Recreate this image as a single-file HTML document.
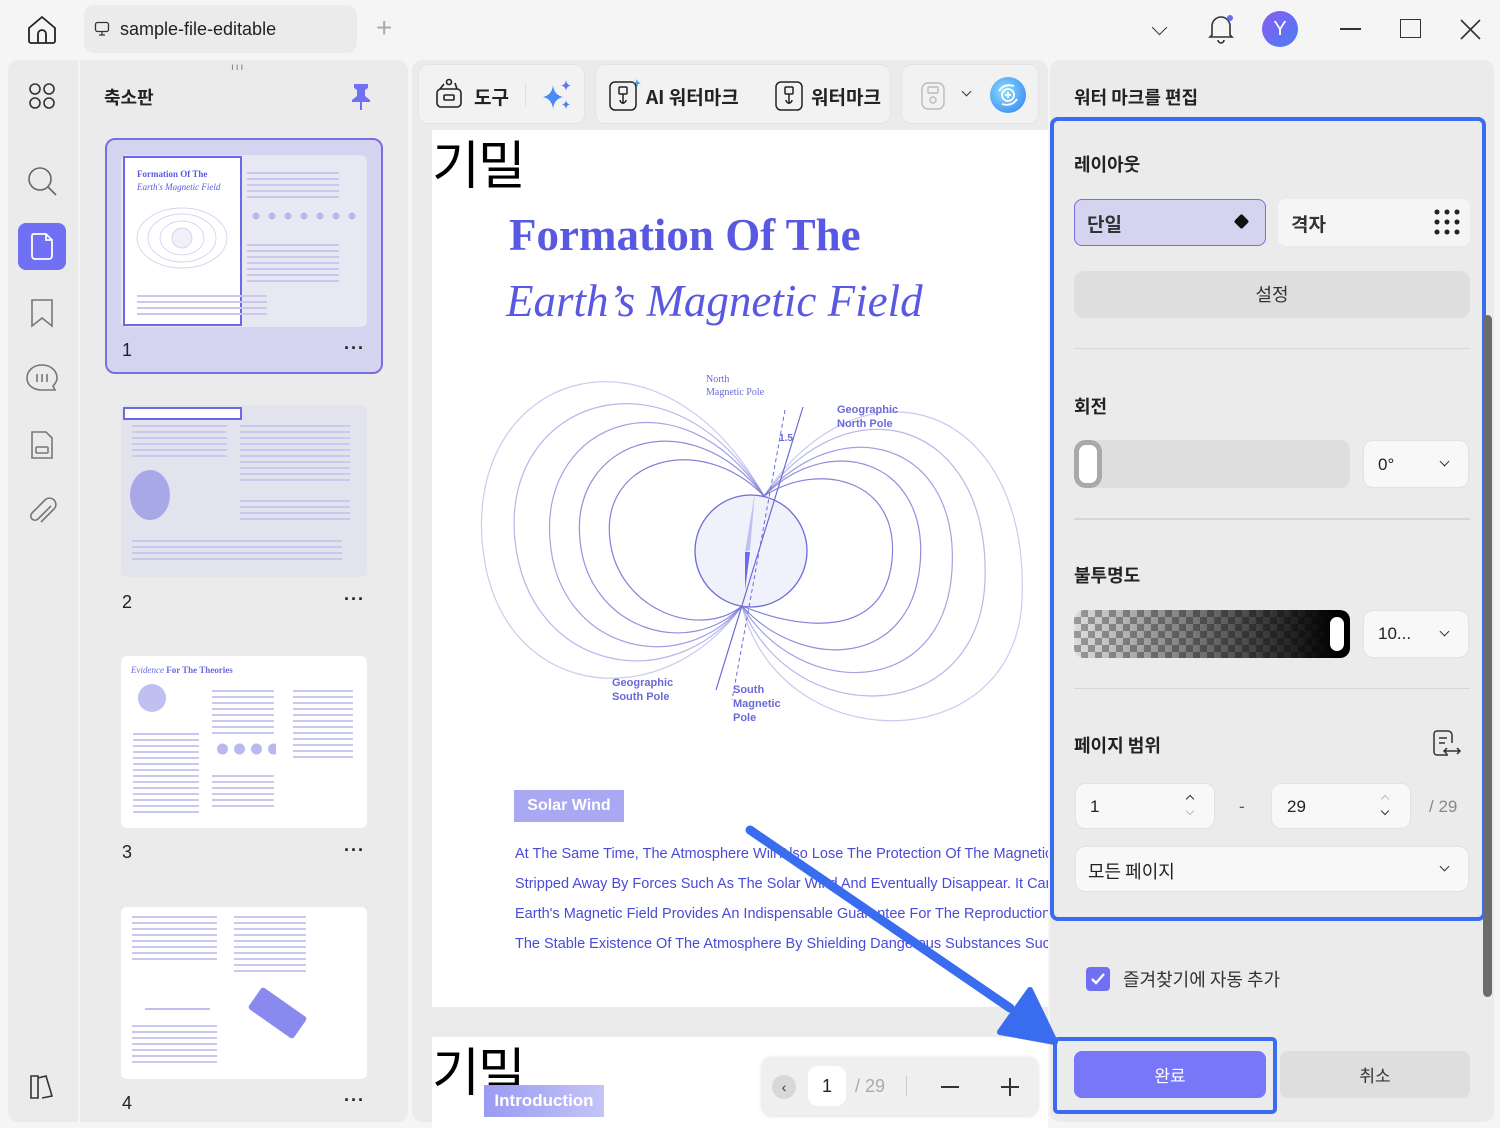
<!DOCTYPE html>
<html><head><meta charset="utf-8">
<style>
*{box-sizing:border-box;margin:0;padding:0}
body{width:1500px;height:1128px;background:#f5f5f5;font-family:"Liberation Sans","Noto Sans CJK KR",sans-serif;position:relative;overflow:hidden;color:#222}
.a{position:absolute}
.kr{font-family:"Noto Sans CJK KR","Liberation Sans",sans-serif}
.lines{background:repeating-linear-gradient(#c9c9ef 0 2px,transparent 2px 6px)}
.thumb{background:#fff;border-radius:6px}
.num{font-size:18px;color:#222}
.dots{font-size:18px;font-weight:bold;letter-spacing:1px}
.pill{background:#f8f8f9;border-radius:10px;border:1px solid #e2e2e4}
.sec{font-size:18px;font-weight:bold}
.chev{width:8px;height:8px;border-right:1.6px solid #333;border-bottom:1.6px solid #333;transform:rotate(45deg)}
.ptxt{font-size:14.5px;color:#4a4ad8;white-space:nowrap}
</style></head><body>

<!-- top bar -->
<svg class="a" style="left:26px;top:14px" width="32" height="32" viewBox="0 0 32 32" fill="none" stroke="#222" stroke-width="1.8"><path d="M3 14 L16 3 L29 14 V27 a2 2 0 0 1 -2 2 H5 a2 2 0 0 1 -2 -2 Z"/><path d="M12 29 V20 a4 4 0 0 1 8 0 V29"/></svg>
<div class="a" style="left:84px;top:5px;width:273px;height:48px;background:#ebebeb;border-radius:10px"></div>
<svg class="a" style="left:94px;top:21px" width="16" height="16" viewBox="0 0 16 16" fill="none" stroke="#333" stroke-width="1.3"><rect x="1.5" y="1.5" width="13" height="9" rx="2"/><path d="M8 10.5v3M5 14h6"/></svg>
<div class="a" style="left:120px;top:19px;font-size:18px;color:#222">sample-file-editable</div>
<div class="a" style="left:376px;top:12px;font-size:28px;color:#aaa;font-weight:200">+</div>
<div class="a chev" style="left:1154px;top:22px;width:11px;height:11px"></div>
<svg class="a" style="left:1206px;top:12px" width="30" height="32" viewBox="0 0 30 32" fill="none" stroke="#333" stroke-width="1.6"><path d="M6 23 V14 a9 9 0 0 1 18 0 V23 L26 25 H4 Z"/><path d="M12 28 a3 3 0 0 0 6 0"/><circle cx="24" cy="6" r="3" fill="#6a6af0" stroke="none"/></svg>
<div class="a" style="left:1262px;top:11px;width:36px;height:36px;border-radius:50%;background:linear-gradient(135deg,#8a5cf0,#4a7cf5);color:#fff;font-size:20px;text-align:center;line-height:36px">Y</div>
<div class="a" style="left:1340px;top:28px;width:21px;height:1.6px;background:#333"></div>
<div class="a" style="left:1400px;top:19px;width:21px;height:19px;border:1.6px solid #333"></div>
<svg class="a" style="left:1460px;top:19px" width="21" height="21" stroke="#333" stroke-width="1.6"><path d="M1 1L20 20M20 1L1 20"/></svg>

<!-- left rail -->
<div class="a" style="left:8px;top:60px;width:70px;height:1062px;background:#ebebeb;border-radius:10px 0 0 10px"></div>
<svg class="a" style="left:28px;top:82px" width="28" height="28" fill="none" stroke="#333" stroke-width="1.6"><rect x="2" y="2" width="10" height="10" rx="5"/><rect x="16" y="2" width="10" height="10" rx="5"/><rect x="2" y="16" width="10" height="10" rx="5"/><rect x="16" y="16" width="10" height="10" rx="5"/></svg>
<svg class="a" style="left:26px;top:165px" width="32" height="32" fill="none" stroke="#666" stroke-width="1.6"><circle cx="14" cy="14" r="11"/><path d="M22 22 L30 30"/></svg>
<div class="a" style="left:18px;top:223px;width:48px;height:47px;background:#7070f5;border-radius:8px"></div>
<svg class="a" style="left:29px;top:232px" width="26" height="29" fill="none" stroke="#fff" stroke-width="1.8"><path d="M4 2 H17 L23 8 V24 a3 3 0 0 1 -3 3 H6 a3 3 0 0 1 -3 -3 V5 a3 3 0 0 1 1-3Z"/><path d="M17 2 V8 H23"/></svg>
<svg class="a" style="left:30px;top:298px" width="24" height="30" fill="none" stroke="#777" stroke-width="1.6"><path d="M2 2 H22 V28 L12 20 L2 28 Z"/></svg>
<svg class="a" style="left:25px;top:362px" width="34" height="32" fill="none" stroke="#777" stroke-width="1.6"><path d="M17 3 C8 3 2 9 2 16 C2 23 8 28 17 28 H30 L28 24 C31 21 32 19 32 16 C32 9 26 3 17 3Z"/><path d="M12 12v8M17 12v8M22 12v8"/></svg>
<svg class="a" style="left:29px;top:430px" width="26" height="30" fill="none" stroke="#777" stroke-width="1.6"><path d="M3 2 H17 L23 8 V28 H3 Z"/><rect x="7" y="17" width="12" height="6" rx="1"/></svg>
<svg class="a" style="left:27px;top:496px" width="30" height="32" fill="none" stroke="#777" stroke-width="1.6"><path d="M24 10 L11 23 a4 4 0 0 1 -6 -6 L18 4 a6 6 0 0 1 9 9 L14 26"/></svg>
<svg class="a" style="left:28px;top:1072px" width="28" height="28" fill="none" stroke="#333" stroke-width="1.6"><path d="M3 4 H10 V26 H3 Z"/><path d="M10 6 L18 4 L24 24 L14 26"/></svg>

<!-- thumbnails panel -->
<div class="a" style="left:80px;top:60px;width:328px;height:1062px;background:#ebebeb;border-radius:0 10px 10px 0"></div>
<div class="a" style="left:231px;top:62px;font-size:10px;color:#777;letter-spacing:2px">ııı</div>
<div class="a kr" style="left:104px;top:84px;font-size:18px;font-weight:bold">축소판</div>
<svg class="a" style="left:350px;top:82px" width="22" height="28"><path d="M4 2 H18 V6 L15 8 V14 L20 18 V20 H2 V18 L7 14 V8 L4 6Z" fill="#7070f5"/><path d="M11 20 V28" stroke="#7070f5" stroke-width="2"/></svg>

<div class="a" style="left:105px;top:138px;width:278px;height:236px;background:#d4d4f0;border:2px solid #7b6fe0;border-radius:10px"></div>
<div class="a thumb" style="left:121px;top:155px;width:246px;height:172px;background:#e8e8f3"></div>
<div class="a" style="left:123px;top:156px;width:119px;height:170px;background:#fff;border:2.5px solid #6a6ae8"></div>
<div class="a" style="left:137px;top:169px;font-family:'Liberation Serif',serif;font-size:9px;font-weight:bold;color:#5a5ae0">Formation Of The</div>
<div class="a" style="left:137px;top:182px;font-family:'Liberation Serif',serif;font-size:9px;font-style:italic;color:#5a5ae0">Earth's Magnetic Field</div>
<svg class="a" style="left:130px;top:198px" width="105" height="80" fill="none" stroke="#c8c8ea" stroke-width=".7"><ellipse cx="52" cy="40" rx="45" ry="30"/><ellipse cx="52" cy="40" rx="34" ry="24"/><ellipse cx="52" cy="40" rx="22" ry="17"/><circle cx="52" cy="40" r="10" fill="#f0f0fb"/></svg>
<div class="a lines" style="left:137px;top:295px;width:130px;height:22px"></div>
<div class="a lines" style="left:247px;top:172px;width:92px;height:26px"></div>
<div class="a" style="left:248px;top:210px;width:110px;height:12px;background:radial-gradient(circle,#b8b8ee 3px,transparent 4px) 0 0/16px 12px"></div>
<div class="a lines" style="left:247px;top:244px;width:92px;height:40px"></div>
<div class="a num" style="left:122px;top:340px">1</div>
<div class="a dots" style="left:344px;top:338px">···</div>

<div class="a thumb" style="left:121px;top:405px;width:246px;height:172px;background:#e3e3ee"></div>
<div class="a" style="left:123px;top:407px;width:119px;height:13px;border:2.5px solid #6a6ae8;background:#fff"></div>
<div class="a lines" style="left:132px;top:425px;width:95px;height:34px"></div>
<div class="a" style="left:130px;top:470px;width:40px;height:50px;border-radius:50%;background:#a8a8e8"></div>
<div class="a lines" style="left:240px;top:425px;width:110px;height:60px"></div>
<div class="a lines" style="left:240px;top:500px;width:110px;height:20px"></div>
<div class="a lines" style="left:132px;top:540px;width:210px;height:24px"></div>
<div class="a num" style="left:122px;top:592px">2</div>
<div class="a dots" style="left:344px;top:589px">···</div>

<div class="a thumb" style="left:121px;top:656px;width:246px;height:172px"></div>
<div class="a" style="left:131px;top:665px;font-family:'Liberation Serif',serif;font-size:9px;color:#6a6ae0"><i>Evidence</i> <b>For The Theories</b></div>
<div class="a" style="left:138px;top:684px;width:28px;height:28px;border-radius:50%;background:#c0c0f0"></div>
<div class="a lines" style="left:133px;top:733px;width:66px;height:80px"></div>
<div class="a lines" style="left:212px;top:690px;width:62px;height:45px"></div>
<div class="a" style="left:214px;top:742px;width:62px;height:14px;background:radial-gradient(circle,#b8b8ee 5px,transparent 6px) 0 0/17px 14px"></div>
<div class="a lines" style="left:212px;top:775px;width:62px;height:35px"></div>
<div class="a lines" style="left:293px;top:690px;width:60px;height:70px"></div>
<div class="a num" style="left:122px;top:842px">3</div>
<div class="a dots" style="left:344px;top:840px">···</div>

<div class="a thumb" style="left:121px;top:907px;width:246px;height:172px"></div>
<div class="a lines" style="left:132px;top:916px;width:85px;height:48px"></div>
<div class="a lines" style="left:234px;top:916px;width:72px;height:60px"></div>
<div class="a" style="left:145px;top:975px;width:65px;height:35px;border-bottom:2px solid #c0c0ee"></div>
<div class="a lines" style="left:132px;top:1025px;width:85px;height:40px"></div>
<div class="a" style="left:250px;top:1000px;width:55px;height:26px;background:#8a8aee;transform:rotate(35deg);border-radius:3px"></div>
<div class="a num" style="left:122px;top:1093px">4</div>
<div class="a dots" style="left:344px;top:1090px">···</div>

<!-- middle area -->
<div class="a" style="left:412px;top:60px;width:636px;height:1062px;background:#ebebeb;border-radius:10px"></div>
<div class="a" style="left:418px;top:64px;width:167px;height:60px;background:#f2f2f3;border-radius:10px;border:1px solid #e3e3e5"></div>
<div class="a" style="left:595px;top:64px;width:296px;height:60px;background:#f2f2f3;border-radius:10px;border:1px solid #e3e3e5"></div>
<div class="a" style="left:901px;top:64px;width:138px;height:60px;background:#f2f2f3;border-radius:10px;border:1px solid #e3e3e5"></div>
<svg class="a" style="left:435px;top:78px" width="30" height="32" fill="none" stroke="#222" stroke-width="1.6"><rect x="2" y="11" width="24" height="18" rx="4"/><rect x="9" y="17" width="10" height="5" rx="1"/><circle cx="14" cy="4" r="2.5"/><path d="M5 11 L9 6 M22 11 L20 5"/></svg>
<div class="a kr" style="left:474px;top:83px;font-size:19px;font-weight:bold">도구</div>
<div class="a" style="left:525px;top:84px;width:1px;height:22px;background:#ddd"></div>
<svg class="a" style="left:540px;top:78px" width="34" height="34"><path d="M13 7 Q14 17 23 19 Q14 21 13 31 Q12 21 3 19 Q12 17 13 7Z" fill="#4a8af5"/><path d="M26 2 Q26.5 7 31 7.5 Q26.5 8 26 13 Q25.5 8 21 7.5 Q25.5 7 26 2Z" fill="#5a7af5"/><path d="M26 22 Q26.5 26 30 26.5 Q26.5 27 26 31 Q25.5 27 22 26.5 Q25.5 26 26 22Z" fill="#5a7af5"/></svg>
<svg class="a" style="left:608px;top:78px" width="34" height="34" fill="none" stroke="#222" stroke-width="1.5"><rect x="2" y="4" width="26" height="28" rx="5"/><rect x="11" y="9" width="8" height="7" rx="1"/><path d="M15 16 V26 M12 22 a3 3 0 1 0 6 0"/><path d="M29 1 L30 4 L33 5 L30 6 L29 9 L28 6 L25 5 L28 4Z" fill="#3a9af5" stroke="none"/></svg>
<div class="a kr" style="left:646px;top:83px;font-size:19px;font-weight:bold">AI 워터마크</div>
<svg class="a" style="left:774px;top:80px" width="30" height="32" fill="none" stroke="#222" stroke-width="1.5"><rect x="2" y="2" width="26" height="28" rx="5"/><rect x="11" y="7" width="8" height="7" rx="1"/><path d="M15 14 V24 M12 20 a3 3 0 1 0 6 0"/></svg>
<div class="a kr" style="left:811px;top:83px;font-size:19px;font-weight:bold">워터마크</div>
<svg class="a" style="left:920px;top:81px" width="26" height="30" fill="none" stroke="#bbb" stroke-width="1.4"><rect x="2" y="2" width="22" height="26" rx="6"/><rect x="8" y="6" width="10" height="6" rx="1"/><circle cx="13" cy="19" r="3"/></svg>
<div class="a chev" style="left:963px;top:88px;width:7px;height:7px"></div>
<div class="a" style="left:990px;top:77px;width:36px;height:36px;border-radius:50%;background:radial-gradient(circle at 40% 40%,#8ee0ff,#2a7af0)"></div>
<svg class="a" style="left:994px;top:81px" width="28" height="28" fill="none" stroke="#fff" stroke-width="1.8"><circle cx="14" cy="14" r="6"/><path d="M5 10 Q10 2 20 5 M23 18 Q18 26 8 23"/><path d="M14 11v6M11 14h6"/></svg>

<!-- page 1 -->
<div class="a" style="left:432px;top:130px;width:616px;height:877px;background:#fff;overflow:hidden">
  <div class="a kr" style="left:0;top:-6px;font-size:52px;color:#000;font-weight:400;letter-spacing:-2px">기밀</div>
  <div class="a" style="left:77px;top:79px;font-family:'Liberation Serif',serif;font-size:45px;font-weight:bold;color:#5858e2;white-space:nowrap">Formation Of The</div>
  <div class="a" style="left:74px;top:145px;font-family:'Liberation Serif',serif;font-size:45px;font-style:italic;color:#5858e2;white-space:nowrap">Earth’s Magnetic Field</div>
  <svg class="a" style="left:0;top:230px" width="616" height="370" viewBox="432 360 616 370" fill="none">
    <g stroke="#7b7bd8" stroke-width="1.2">
      <path d="M764 496 C700 430 600 460 610 540 C618 610 700 640 742 606" opacity=".95"/>
      <path d="M764 496 C690 400 570 440 580 540 C588 630 690 660 742 606" opacity=".85"/>
      <path d="M764 496 C680 370 540 420 550 540 C558 650 680 680 742 606" opacity=".7"/>
      <path d="M764 496 C670 340 500 400 515 540 C528 670 670 700 742 606" opacity=".55"/>
      <path d="M764 496 C660 310 470 370 482 540 C494 700 660 720 742 606" opacity=".4"/>
      <path d="M764 496 C820 460 900 480 892 560 C884 640 800 630 742 606" opacity=".95"/>
      <path d="M764 496 C830 430 930 460 920 565 C910 670 800 670 742 606" opacity=".85"/>
      <path d="M764 496 C840 410 960 440 952 570 C944 700 800 700 742 606" opacity=".7"/>
      <path d="M764 496 C850 380 990 420 985 580 C980 730 790 730 742 606" opacity=".55"/>
      <path d="M764 496 C860 350 1030 400 1022 600 C1015 760 780 760 742 606" opacity=".4"/>
    </g>
    <circle cx="751" cy="551" r="56" fill="#f1f1fb" stroke="#6a6ad8" stroke-width="1.3"/>
    <path d="M755 492 L750 550 L745 552Z" fill="#c0c0f0"/>
    <path d="M750 552 L745 552 L745 590Z" fill="#6a6af0"/>
    <path d="M803 407 L716 690" stroke="#6a6ad8" stroke-width="1.2"/>
    <path d="M785 410 L732 700" stroke="#6a6ad8" stroke-width="1" stroke-dasharray="4 3"/>
    <text x="706" y="382" font-family="Liberation Serif" font-size="10" fill="#6a6ad8">North</text>
    <text x="706" y="395" font-family="Liberation Serif" font-size="10" fill="#6a6ad8">Magnetic Pole</text>
    <text x="779" y="441" font-family="Liberation Sans" font-size="10" fill="#6a6ad8" font-weight="bold">1.5</text>
    <text x="837" y="413" font-family="Liberation Sans" font-size="11" fill="#6a6ad8" font-weight="bold">Geographic</text>
    <text x="837" y="427" font-family="Liberation Sans" font-size="11" fill="#6a6ad8" font-weight="bold">North Pole</text>
    <text x="612" y="686" font-family="Liberation Sans" font-size="11" fill="#6a6ad8" font-weight="bold">Geographic</text>
    <text x="612" y="700" font-family="Liberation Sans" font-size="11" fill="#6a6ad8" font-weight="bold">South Pole</text>
    <text x="733" y="693" font-family="Liberation Sans" font-size="11" fill="#6a6ad8" font-weight="bold">South</text>
    <text x="733" y="707" font-family="Liberation Sans" font-size="11" fill="#6a6ad8" font-weight="bold">Magnetic</text>
    <text x="733" y="721" font-family="Liberation Sans" font-size="11" fill="#6a6ad8" font-weight="bold">Pole</text>
  </svg>
  <div class="a" style="left:82px;top:660px;width:110px;height:32px;background:#a9a9f3;color:#fff;font-size:16px;font-weight:bold;text-align:center;line-height:32px">Solar Wind</div>
  <div class="a ptxt" style="left:83px;top:716px">At The Same Time, The Atmosphere Will Also Lose The Protection Of The Magnetic Field</div>
  <div class="a ptxt" style="left:83px;top:746px">Stripped Away By Forces Such As The Solar Wind And Eventually Disappear. It Can Be</div>
  <div class="a ptxt" style="left:83px;top:776px">Earth's Magnetic Field Provides An Indispensable Guarantee For The Reproduction Of</div>
  <div class="a ptxt" style="left:83px;top:806px">The Stable Existence Of The Atmosphere By Shielding Dangerous Substances Such As</div>
</div>

<!-- page 2 -->
<div class="a" style="left:432px;top:1037px;width:616px;height:91px;background:#fff;overflow:hidden">
  <div class="a kr" style="left:0;top:-6px;font-size:52px;color:#000;letter-spacing:-2px">기밀</div>
  <div class="a" style="left:52px;top:48px;width:120px;height:32px;background:linear-gradient(90deg,#9a9af3,#c4c4f8);color:#fff;font-size:17px;font-weight:bold;text-align:center;line-height:32px">Introduction</div>
</div>
<div class="a" style="left:762px;top:1057px;width:276px;height:58px;background:#efeff0;border-radius:10px;box-shadow:0 1px 4px rgba(0,0,0,.15)"></div>
<div class="a" style="left:772px;top:1075px;width:24px;height:24px;border-radius:50%;background:#d8d8d8;font-size:14px;text-align:center;line-height:24px;color:#333">‹</div>
<div class="a" style="left:808px;top:1066px;width:38px;height:40px;background:#fff;border-radius:10px;font-size:18px;text-align:center;line-height:40px">1</div>
<div class="a" style="left:855px;top:1076px;font-size:18px;color:#aaa">/ 29</div>
<div class="a" style="left:906px;top:1076px;width:1px;height:20px;background:#ccc"></div>
<div class="a" style="left:941px;top:1086px;width:18px;height:1.6px;background:#333"></div>
<div class="a" style="left:1001px;top:1086px;width:18px;height:1.6px;background:#333"></div>
<div class="a" style="left:1009px;top:1078px;width:1.6px;height:18px;background:#333"></div>

<!-- right panel -->
<div class="a" style="left:1050px;top:60px;width:444px;height:1062px;background:#ebebeb;border-radius:10px"></div>
<div class="a kr" style="left:1074px;top:84px;font-size:18px;font-weight:bold">워터 마크를 편집</div>
<div class="a" style="left:1050px;top:117px;width:436px;height:804px;border:4px solid #3a6cf0;border-radius:8px"></div>
<div class="a" style="left:1483px;top:315px;width:9px;height:682px;background:#6c6c6c;border-radius:5px"></div>
<div class="a kr sec" style="left:1074px;top:151px">레이아웃</div>
<div class="a" style="left:1074px;top:199px;width:192px;height:47px;background:#d4d4f0;border:1.5px solid #7b6fe0;border-radius:8px"></div>
<div class="a kr" style="left:1087px;top:210px;font-size:19px;font-weight:bold;color:#333">단일</div>
<div class="a" style="left:1236px;top:216px;width:11px;height:11px;background:#111;transform:rotate(45deg);border-radius:2px"></div>
<div class="a" style="left:1278px;top:199px;width:192px;height:47px;background:#f5f5f6;border-radius:8px"></div>
<div class="a kr" style="left:1291px;top:210px;font-size:19px;color:#333;font-weight:bold">격자</div>
<div class="a" style="left:1432px;top:207px;width:30px;height:30px;background:radial-gradient(circle,#222 2.2px,transparent 2.8px) 0 0/10px 10px"></div>
<div class="a" style="left:1074px;top:271px;width:396px;height:47px;background:#dededf;border-radius:10px;text-align:center;line-height:47px;font-size:18px;color:#333" ><span class="kr">설정</span></div>
<div class="a" style="left:1074px;top:348px;width:396px;height:1px;background:#d6d6d6"></div>
<div class="a kr sec" style="left:1074px;top:393px">회전</div>
<div class="a" style="left:1074px;top:440px;width:276px;height:48px;background:#dededf;border-radius:10px"></div>
<div class="a" style="left:1074px;top:440px;width:28px;height:48px;background:#fff;border:5px solid #a9a9a9;border-radius:12px"></div>
<div class="a pill" style="left:1363px;top:440px;width:106px;height:48px"></div>
<div class="a" style="left:1378px;top:455px;font-size:17px">0°</div>
<div class="a chev" style="left:1441px;top:458px;width:7px;height:7px"></div>
<div class="a" style="left:1074px;top:518px;width:396px;height:2px;background:#d6d6d6"></div>
<div class="a kr sec" style="left:1074px;top:562px">불투명도</div>
<div class="a" style="left:1074px;top:610px;width:276px;height:48px;border-radius:10px;background:linear-gradient(90deg,rgba(0,0,0,0),#000 95%),repeating-conic-gradient(#999 0 25%,#ddd 0 50%) 0 0/14px 14px"></div>
<div class="a" style="left:1330px;top:617px;width:14px;height:34px;background:#fff;border-radius:7px"></div>
<div class="a pill" style="left:1363px;top:610px;width:106px;height:48px"></div>
<div class="a" style="left:1378px;top:624px;font-size:17px">10...</div>
<div class="a chev" style="left:1441px;top:628px;width:7px;height:7px"></div>
<div class="a" style="left:1074px;top:688px;width:396px;height:1px;background:#d6d6d6"></div>
<div class="a kr sec" style="left:1074px;top:732px">페이지 범위</div>
<svg class="a" style="left:1432px;top:729px" width="30" height="30" fill="none" stroke="#333" stroke-width="1.5"><path d="M16 26 H5 a3 3 0 0 1 -3 -3 V5 a3 3 0 0 1 3 -3 H16 a4 4 0 0 1 4 4 V14"/><path d="M7 9h8M7 14h6"/><path d="M12 22 H28 M15 19 L12 22 L15 25 M25 19 L28 22 L25 25"/></svg>
<div class="a pill" style="left:1075px;top:783px;width:140px;height:46px"></div>
<div class="a" style="left:1090px;top:797px;font-size:17px">1</div>
<div class="a" style="left:1187px;top:796px;width:6px;height:6px;border-left:1.5px solid #333;border-top:1.5px solid #333;transform:rotate(45deg)"></div>
<div class="a" style="left:1187px;top:808px;width:6px;height:6px;border-right:1.5px solid #bbb;border-bottom:1.5px solid #bbb;transform:rotate(45deg)"></div>
<div class="a" style="left:1239px;top:797px;font-size:17px;color:#555">-</div>
<div class="a pill" style="left:1271px;top:783px;width:140px;height:46px"></div>
<div class="a" style="left:1287px;top:797px;font-size:17px">29</div>
<div class="a" style="left:1382px;top:796px;width:6px;height:6px;border-left:1.5px solid #bbb;border-top:1.5px solid #bbb;transform:rotate(45deg)"></div>
<div class="a" style="left:1382px;top:808px;width:6px;height:6px;border-right:1.5px solid #333;border-bottom:1.5px solid #333;transform:rotate(45deg)"></div>
<div class="a" style="left:1429px;top:797px;font-size:17px;color:#888">/ 29</div>
<div class="a pill" style="left:1075px;top:846px;width:394px;height:46px"></div>
<div class="a kr" style="left:1088px;top:858px;font-size:18px">모든 페이지</div>
<div class="a chev" style="left:1441px;top:863px;width:7px;height:7px"></div>
<div class="a" style="left:1086px;top:967px;width:24px;height:24px;background:#7070f5;border-radius:4px"></div>
<svg class="a" style="left:1090px;top:972px" width="16" height="14" fill="none" stroke="#fff" stroke-width="2.4"><path d="M2 7 L6 11 L14 2"/></svg>
<div class="a kr" style="left:1123px;top:966px;font-size:18px;color:#333">즐겨찾기에 자동 추가</div>

<div class="a" style="left:1053px;top:1037px;width:224px;height:77px;border:4px solid #3a6cf0;border-radius:5px"></div>
<div class="a kr" style="left:1074px;top:1051px;width:192px;height:47px;background:#7777f8;border-radius:8px;color:#fff;font-size:17px;text-align:center;line-height:47px">완료</div>
<div class="a kr" style="left:1280px;top:1051px;width:190px;height:47px;background:#dededf;border-radius:8px;color:#333;font-size:17px;text-align:center;line-height:47px">취소</div>

<!-- big arrow -->
<svg class="a" style="left:0;top:0" width="1500" height="1128"><path d="M750 830 L1010 1008" stroke="#3a6cf0" stroke-width="9" stroke-linecap="round"/><path d="M1055 1042 L1000 1032 L1030 990 Z" fill="#3a6cf0" stroke="#3a6cf0" stroke-width="6" stroke-linejoin="round"/></svg>
</body></html>
